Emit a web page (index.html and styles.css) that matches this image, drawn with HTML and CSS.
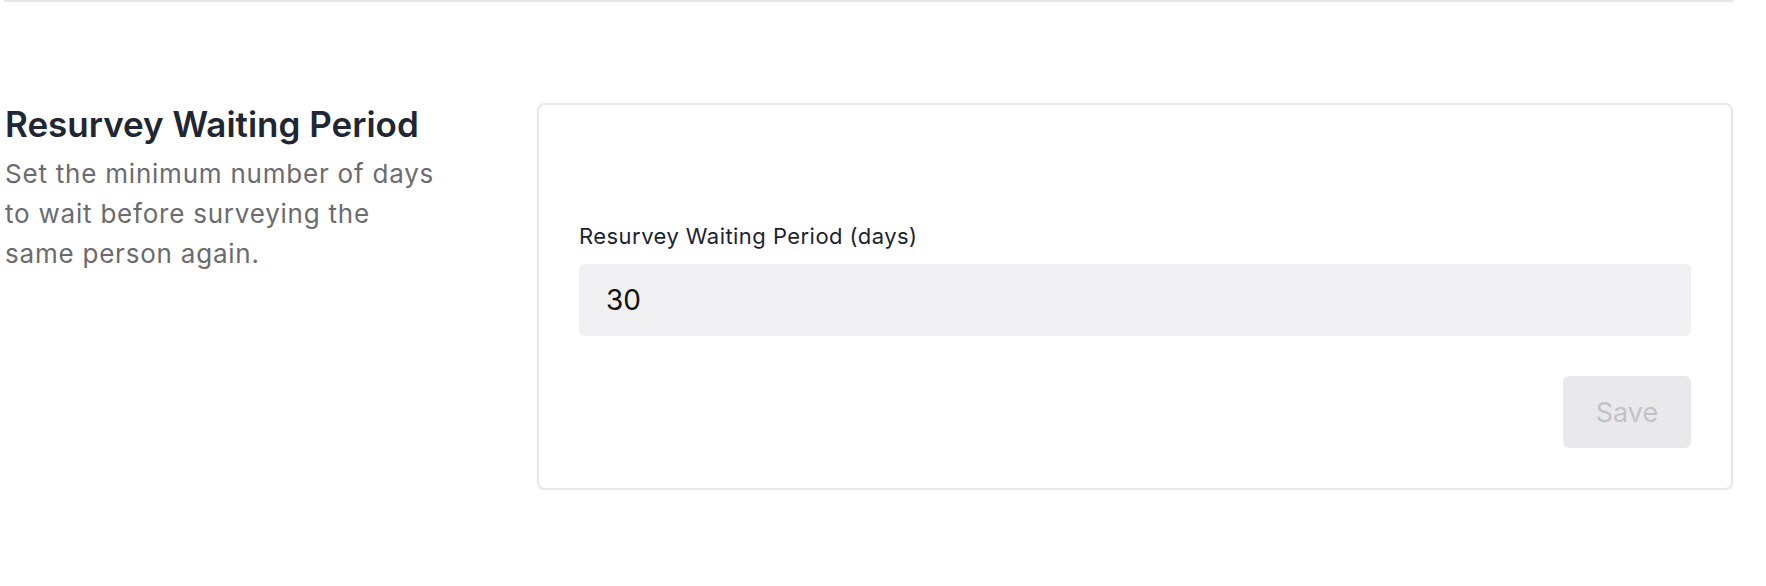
FILE: index.html
```html
<!DOCTYPE html>
<html lang="en">
<head>
<meta charset="utf-8">
<title>Resurvey Waiting Period</title>
<link rel="stylesheet" href="styles.css">
</head>
<body>
<div class="page">
  <div class="divider"></div>
  <section class="setting">
    <div class="intro">
      <h2 class="intro-title">Resurvey Waiting Period</h2>
      <p class="intro-desc">Set the minimum number of days to wait before surveying the same person again.</p>
    </div>
    <div class="card">
      <div class="card-spacer"></div>
      <label class="field-label" for="wait">Resurvey Waiting Period (days)</label>
      <div class="field-input" id="wait">30</div>
      <div class="actions">
        <button class="btn-save" type="button">Save</button>
      </div>
    </div>
  </section>
</div>
</body>
</html>
```
FILE: styles.css
```css
html, body {
  margin: 0;
  padding: 0;
  background: #ffffff;
}
body {
  font-family: Inter, "Noto Sans", sans-serif;
}
.page {
  width: 1729px;
  padding-left: 4px;
}
.divider {
  height: 2px;
  background: #e7e7e7;
}
.setting {
  display: flex;
  align-items: flex-start;
  gap: 90px;
  margin-top: 101px;
}
.intro {
  width: 443px;
  flex: none;
}
.intro-title {
  margin: 0;
  font-size: 35px;
  line-height: 42px;
  font-weight: 600;
  color: #1f2733;
  padding-left: 1px;
}
.intro-desc {
  margin: 9px 0 0 0;
  font-size: 26px;
  line-height: 40px;
  letter-spacing: 0.78px;
  color: #6b6b6e;
  padding-left: 1px;
}
.card {
  flex: 1;
  border: 2px solid #e8e8e8;
  border-radius: 8px;
  padding: 0 40px 40px 40px;
  box-shadow: 0 3px 3px rgba(0, 0, 0, 0.04);
}
.card-spacer {
  height: 117px;
}
.field-label {
  display: block;
  font-size: 22px;
  line-height: 28px;
  letter-spacing: 0.45px;
  color: #1e1f30;
  margin-bottom: 14px;
}
.field-input {
  height: 72px;
  background: #f0f0f2;
  border-radius: 6px;
  box-sizing: border-box;
  padding-left: 27px;
  display: flex;
  align-items: center;
  font-size: 28px;
  color: #111111;
}
.actions {
  display: flex;
  justify-content: flex-end;
  margin-top: 40px;
}
.btn-save {
  width: 128px;
  height: 72px;
  border: none;
  border-radius: 6px;
  background: #e9e9eb;
  color: #c2c2c6;
  font-family: Inter, "Noto Sans", sans-serif;
  font-size: 27px;
  padding: 0;
}
```
